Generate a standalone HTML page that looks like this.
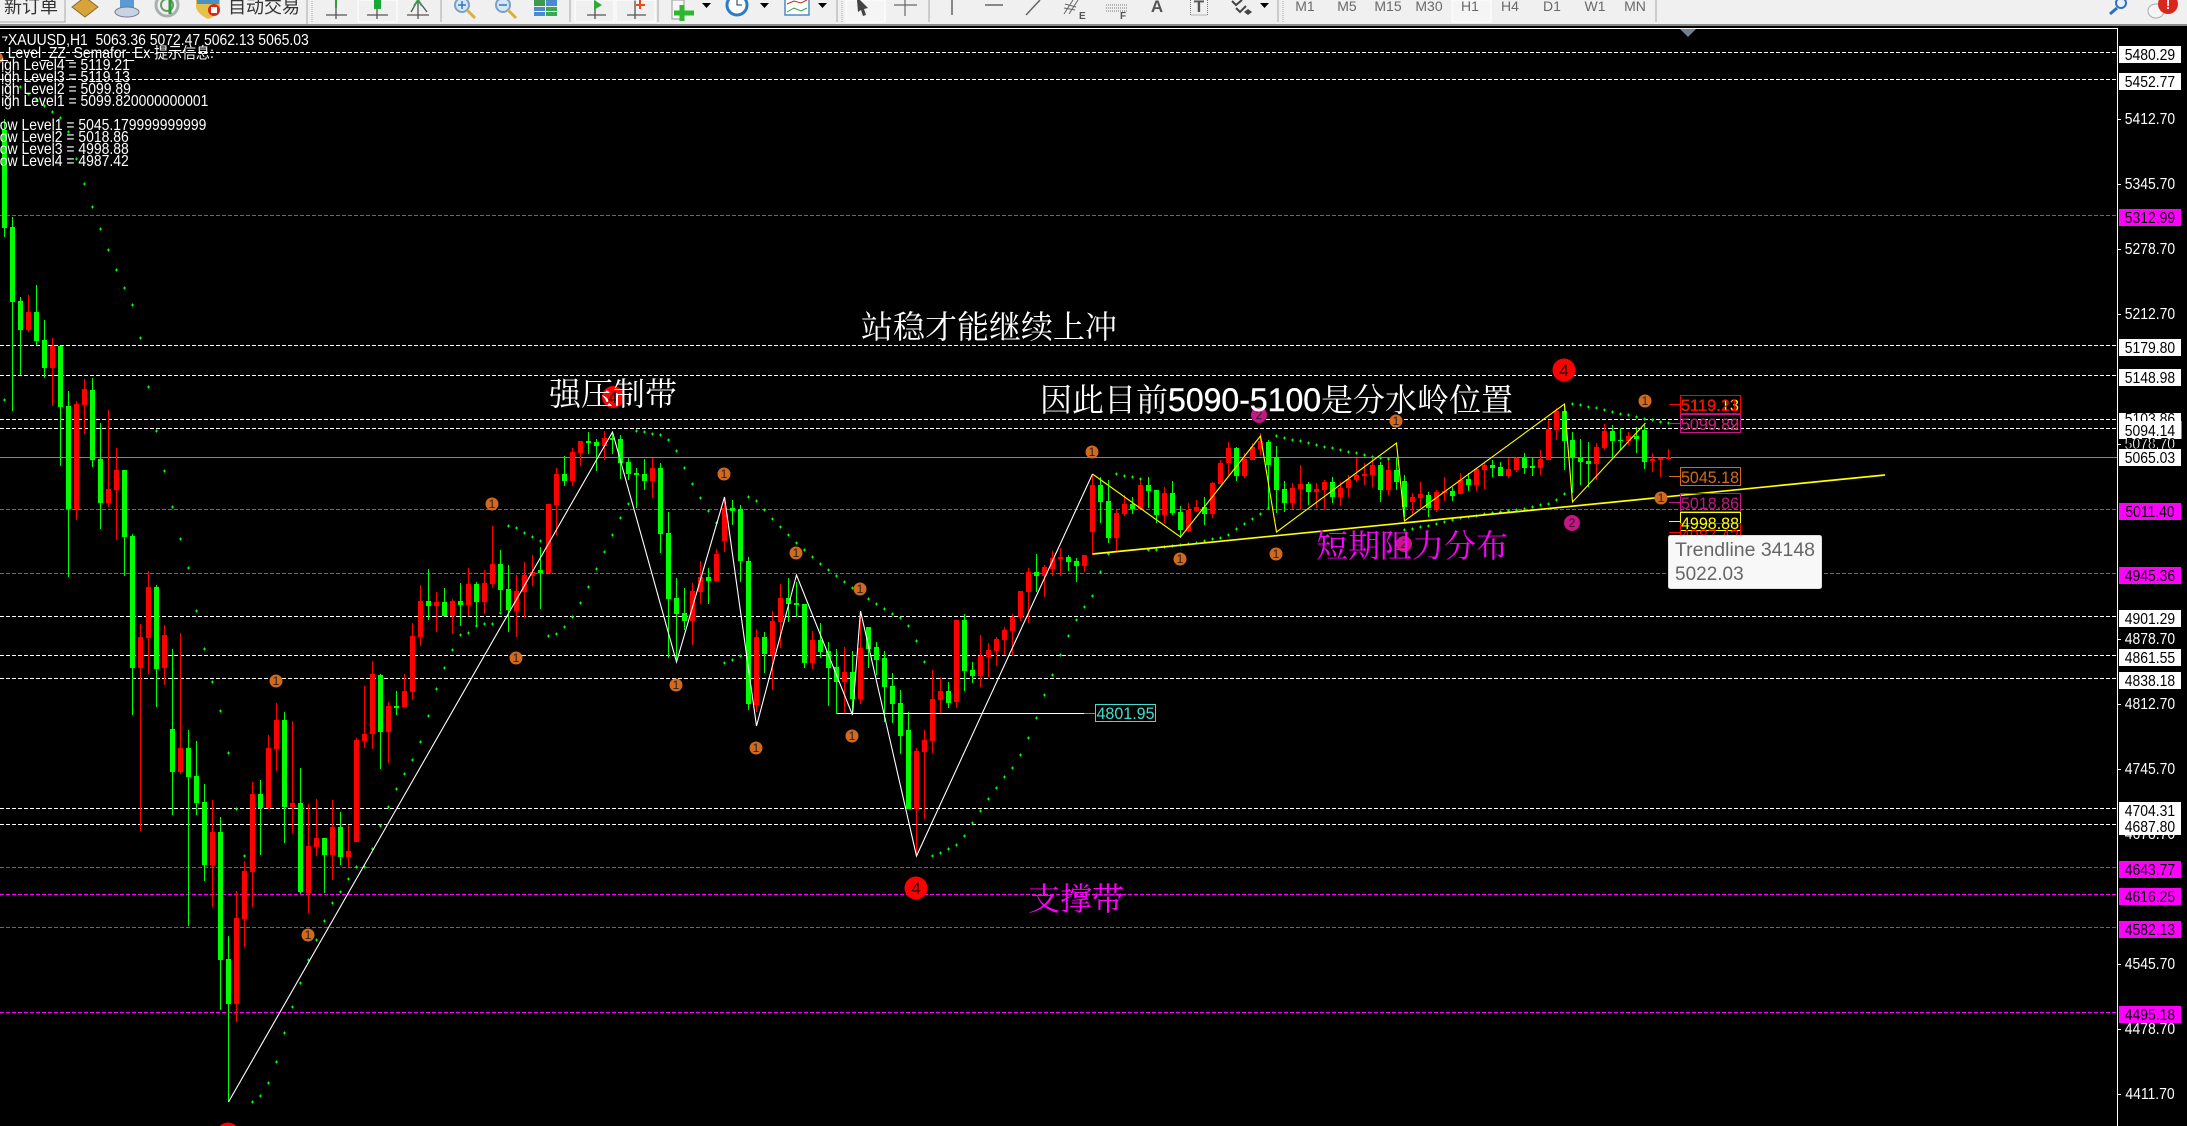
<!DOCTYPE html>
<html><head><meta charset="utf-8"><title>XAUUSD,H1</title>
<style>
html,body{margin:0;padding:0;background:#000;width:2187px;height:1126px;overflow:hidden}
svg{display:block;position:absolute;left:0;top:0}
text{font-family:"Liberation Sans","Noto Serif CJK SC",serif}
.i{font-size:15.500px;fill:#fff}
.t{font-size:15.500px;fill:#fff;text-anchor:middle}
.b{font-size:15.500px;fill:#000;text-anchor:middle}
.c{font-size:32px}
.tb{font-size:18px;fill:#333;font-family:"Liberation Sans","Noto Sans CJK SC",sans-serif}
.p{font-size:14px;fill:#6a6a6a;text-anchor:middle}
.n{font-size:12px;fill:#222;text-anchor:middle}
.l{font-size:17px}
</style></head><body>
<svg width="2187" height="1126" viewBox="0 0 2187 1126" xmlns="http://www.w3.org/2000/svg">
<defs><marker id="p" markerWidth="5" markerHeight="5" refX="2.5" refY="2.5" markerUnits="userSpaceOnUse"><path d="M1 2.5H4M2.5 1V4" stroke="#0f0" stroke-width="1" fill="none" shape-rendering="crispEdges"/></marker></defs>
<rect width="2187" height="1126" fill="#000"/>

<!-- toolbar -->
<rect width="2187" height="24" fill="#f0f0f0"/>
<rect y="24" width="2187" height="2" fill="#8c8c8c"/>
<path d="M0 22H65V0" fill="none" stroke="#a8a8a8"/>
<text class="tb" x="4" y="13">新订单</text>
<path d="M72 7L85-3L98 7L85 17Z" fill="#d8a23c" stroke="#8a6a2b"/>
<path d="M120 0H134V9H120Z" fill="#5b9bd5"/><ellipse cx="127" cy="12" rx="12" ry="5" fill="#c5d3e2" stroke="#778"/>
<circle cx="167" cy="5" r="11" fill="none" stroke="#a9b0b0" stroke-width="3"/><circle cx="167" cy="5" r="6" fill="none" stroke="#6b9b6b" stroke-width="2"/><path d="M170 0V14" stroke="#2f9a3a" stroke-width="3"/>
<path d="M196 0H220V8Q216 17 208 19Q199 15 196 8Z" fill="#e5c04a"/><path d="M197 0H219V4H197Z" fill="#4a90c0"/><circle cx="214" cy="10" r="6" fill="#d8281e"/><rect x="211" y="7" width="6" height="6" fill="#fff"/>
<text class="tb" x="228" y="13">自动交易</text>
<path d="M307 0V24" stroke="#a8a8a8"/><path d="M312 1V23" stroke="#aaa" stroke-dasharray="1 1"/>
<g fill="none" stroke="#555" stroke-width="1.3"><path d="M326 15H347M336 0V19M377 0V19M367 15H388M418 0V19M407 15H429M411 12L418 0L427 12"/><path d="M587 15H606M595 0V19M627 15H646M635 0V19"/></g>
<rect x="358" y="0" width="39" height="22" fill="none" stroke="#fff"/>
<path d="M336 0V8" stroke="#2e9a3a" stroke-width="2"/><rect x="374" y="0" width="7" height="9" fill="#18a83a"/><path d="M414 6L418 0L422 6" stroke="#3a9a50" fill="none" stroke-width="2"/>
<path d="M441 0V22M570 0V22M658 0V22" stroke="#a8a8a8"/>
<g><circle cx="462" cy="5" r="7" fill="#d5e6f5" stroke="#7aa0c8" stroke-width="2"/><path d="M467 10L475 18" stroke="#d8b13a" stroke-width="3"/><path d="M458 5H466M462 1V9" stroke="#2c7ac0" stroke-width="1.5"/><circle cx="503" cy="5" r="7" fill="#d5e6f5" stroke="#7aa0c8" stroke-width="2"/><path d="M508 10L516 18" stroke="#d8b13a" stroke-width="3"/><path d="M499 5H507" stroke="#2c7ac0" stroke-width="1.5"/></g>
<rect x="534" y="0" width="11" height="6" fill="#3a9a50"/><rect x="546" y="0" width="11" height="6" fill="#4a8ad0"/><rect x="534" y="7" width="11" height="9" fill="#4a8ad0"/><rect x="546" y="7" width="11" height="9" fill="#3aaa50"/><path d="M534 11.5H557" stroke="#fff"/>
<rect x="575" y="0" width="39" height="22" fill="none" stroke="#fff"/><rect x="616" y="0" width="39" height="22" fill="none" stroke="#fff"/>
<path d="M594 0L602 5L594 10Z" fill="#2ea83c"/><path d="M640 0V9M636 5H645" stroke="#e04a1e" stroke-width="2"/>
<path d="M672 0H684V19H672Z" fill="#f8f8f8" stroke="#999"/><path d="M682 5V21M674 13H694" stroke="#2fb62f" stroke-width="5"/>
<path d="M702 3H711L706.500 8Z" fill="#000"/>
<circle cx="737" cy="5" r="10" fill="#fff" stroke="#2b7cc4" stroke-width="3"/><path d="M737 0V5H742" stroke="#234" fill="none"/>
<path d="M760 3H769L764.500 8Z" fill="#000"/>
<rect x="785" y="-2" width="24" height="17" fill="#fff" stroke="#4a8ac4" stroke-width="1.5"/><path d="M787 4L794 1L801 3L807 0" stroke="#b03020" fill="none"/><path d="M787 12L794 8L801 11L807 8" stroke="#30a040" fill="none"/>
<path d="M818 3H827L822.500 8Z" fill="#000"/>
<path d="M837 0V22" stroke="#a8a8a8"/><path d="M842 1V23" stroke="#aaa" stroke-dasharray="1 1"/>
<rect x="846" y="0" width="39" height="22" fill="#f5f5f5" stroke="#fff"/>
<path d="M857 0L860 0L868 8L864 9L866 15L863 16L861 10L858 12Z" fill="#444"/>
<path d="M894 5H917M905 0V16" stroke="#666" stroke-width="1.2"/>
<path d="M929 0V22" stroke="#a8a8a8"/>
<path d="M952 0V15" stroke="#666" stroke-width="1.5"/><path d="M985 5H1003" stroke="#666" stroke-width="1.5"/><path d="M1040 0L1026 15" stroke="#666" stroke-width="1.5"/>
<path d="M1073 0L1064 14M1078 0L1069 14M1065 4L1076 7M1064 8L1075 10" stroke="#666" fill="none"/>
<text x="1079" y="19" style="font-size:10px;font-weight:bold" fill="#555">E</text>
<path d="M1106 5H1127M1106 8H1127M1106 11H1127" stroke="#777" stroke-dasharray="1 1"/>
<text x="1120" y="19" style="font-size:10px;font-weight:bold" fill="#555">F</text>
<text x="1157" y="12" style="font-size:17px;font-weight:bold;text-anchor:middle" fill="#555">A</text>
<rect x="1190.500" y="-3" width="17" height="18" fill="none" stroke="#777" stroke-dasharray="1 1"/>
<text x="1199" y="12" style="font-size:17px;font-weight:bold;text-anchor:middle" fill="#555">T</text>
<path d="M1232 1L1236 5L1242 0M1236 8L1240 12L1246 6" stroke="#444" fill="none" stroke-width="2"/><path d="M1244 12L1248 9L1252 12L1248 15Z" fill="#444"/>
<path d="M1260 3H1269L1264.500 8Z" fill="#000"/>
<path d="M1278 0V22" stroke="#a8a8a8"/><path d="M1283 1V23" stroke="#aaa" stroke-dasharray="1 1"/>
<rect x="1452" y="0" width="39" height="22" fill="#f5f5f5" stroke="#fff"/>
<text class="p" x="1305" y="11">M1</text><text class="p" x="1347" y="11">M5</text><text class="p" x="1388" y="11">M15</text><text class="p" x="1429" y="11">M30</text><text class="p" x="1470" y="11">H1</text><text class="p" x="1510" y="11">H4</text><text class="p" x="1552" y="11">D1</text><text class="p" x="1595" y="11">W1</text><text class="p" x="1635" y="11">MN</text>
<path d="M1656 0V22" stroke="#a8a8a8"/>
<circle cx="2121" cy="3" r="5" fill="#e8f2fb" stroke="#2f6fc0" stroke-width="2"/><path d="M2117 8L2110 14" stroke="#2f6fc0" stroke-width="3"/>
<ellipse cx="2156" cy="11" rx="8" ry="7" fill="#f5f5f5" stroke="#aaa"/><circle cx="2168" cy="4" r="10" fill="#d8281e"/><text x="2168" y="9" style="font-size:13px;font-weight:bold;text-anchor:middle" fill="#fff">!</text>

<!-- chart frame -->
<path d="M0 28.500H2117.500V1126" fill="none" stroke="#fff" shape-rendering="crispEdges"/>
<path d="M1680 29H1696L1688 37Z" fill="#708090"/>

<!-- horizontal lines -->
<g shape-rendering="crispEdges" fill="none">
<path stroke="#fff" stroke-dasharray="4 2" d="M0 52.500H2117M0 79.500H2117M0 345.500H2117M0 375.500H2117M0 419.500H2117M0 428.500H2117M0 616.500H2117M0 655.500H2117M0 678.500H2117M0 808.500H2117M0 824.500H2117"/>
<path stroke="#f0f" stroke-dasharray="4 2" d="M0 215.500H2117M0 509.500H2117M0 573.500H2117M0 867.500H2117M0 894.500H2117M0 927.500H2117M0 1012.500H2117"/>
<path stroke="#778899" d="M0 457.500H2117"/>
</g>

<!-- candles -->
<g fill="none" shape-rendering="crispEdges">
<path stroke="#0f0" d="M4.500 119V237M12.500 217V411M20.500 297V375M36.500 285V345M44.500 320V378M60.500 346V466M68.500 391V577M92.500 378V467M100.500 423V529M124.500 470V576M132.500 534V715M156.500 585V707M172.500 649V815M188.500 730V926M196.500 741V815M204.500 784V881M220.500 817V1010M228.500 936V1102M260.500 780V855M284.500 712V843M300.500 768V894M324.500 838V893M340.500 812V865M380.500 674V769M396.500 691V715M428.500 569V620M444.500 588V616M460.500 583V626M476.500 582V627M500.500 550V611M508.500 565V632M540.500 547V609M564.500 456V486M588.500 432V454M596.500 439V471M612.500 432V454M620.500 435V479M628.500 458V480M636.500 468V508M644.500 459V490M660.500 463V553M668.500 512V658M676.500 578V662M684.500 588V630M708.500 568V604M732.500 500V525M740.500 505V582M748.500 557V710M764.500 632V673M788.500 578V622M796.500 582V617M804.500 604V668M820.500 623V658M828.500 642V706M836.500 649V713M852.500 651V713M868.500 627V668M876.500 642V675M884.500 651V722M892.500 673V723M900.500 690V754M908.500 712V809M948.500 682V708M964.500 614V691M972.500 662V683M1036.500 554V592M1068.500 555V571M1076.500 558V582M1100.500 477V523M1108.500 480V543M1132.500 497V514M1148.500 477V508M1156.500 490V523M1172.500 481V515M1180.500 506V538M1204.500 497V525M1236.500 447V481M1268.500 440V508M1276.500 446V513M1284.500 481V512M1308.500 482V505M1332.500 477V503M1380.500 462V502M1396.500 458V490M1404.500 475V517M1428.500 492V517M1452.500 487V501M1468.500 473V491M1492.500 460V477M1500.500 462V476M1524.500 453V474M1532.500 458V476M1564.500 405V470M1572.500 432V493M1580.500 439V485M1588.500 442V487M1612.500 425V457M1620.500 428V450M1636.500 427V453M1644.500 425V469"/>
<path stroke="#0f0" stroke-width="5" d="M4.500 130V228M12.500 227V302M20.500 301V330M36.500 312V341M44.500 340V368M60.500 346V407M68.500 406V509M92.500 390V460M100.500 459V503M124.500 470V537M132.500 536V668M156.500 587V669M172.500 729V772M188.500 748V777M196.500 776V803M204.500 802V865M220.500 832V960M228.500 959V1004M260.500 794V808M284.500 720V807M300.500 803V892M324.500 838V855M340.500 827V857M380.500 675V732M396.500 706V708M428.500 601V606M444.500 602V616M460.500 601V605M476.500 584V602M500.500 564V590M508.500 589V610M540.500 570V573M564.500 474V481M588.500 441V443M596.500 442V446M612.500 438V440M620.500 439V463M628.500 462V474M636.500 473V475M644.500 474V481M660.500 468V534M668.500 533V599M676.500 598V614M684.500 613V621M708.500 577V581M732.500 508V511M740.500 509V561M748.500 561V704M764.500 637V654M788.500 598V604M796.500 603V605M804.500 604V663M820.500 640V652M828.500 651V668M836.500 667V682M852.500 672V699M868.500 627V649M876.500 647V660M884.500 658V687M892.500 686V704M900.500 703V736M908.500 730V809M948.500 691V703M964.500 620V671M972.500 670V676M1036.500 572V576M1068.500 557V562M1076.500 561V566M1100.500 485V502M1108.500 501V538M1132.500 504V509M1148.500 485V491M1156.500 490V515M1172.500 493V513M1180.500 512V530M1204.500 507V514M1236.500 448V476M1268.500 442V465M1276.500 457V490M1284.500 489V503M1308.500 484V492M1332.500 482V497M1380.500 465V490M1396.500 470V482M1404.500 481V507M1428.500 495V508M1452.500 491V496M1468.500 479V485M1492.500 465V468M1500.500 467V476M1524.500 458V468M1532.500 466V468M1564.500 411V441M1572.500 440V458M1580.500 458V462M1588.500 461V464M1612.500 431V441M1620.500 440V441M1636.500 436V439M1644.500 430V462"/>
<path stroke="#f00" d="M28.500 295V332M52.500 338V406M76.500 401V520M84.500 379V434M108.500 410V507M116.500 448V540M140.500 624V831M148.500 571V674M164.500 625V685M180.500 633V774M212.500 800V907M236.500 891V1022M244.500 861V947M252.500 782V907M268.500 735V809M276.500 703V771M292.500 721V833M308.500 804V913M316.500 799V856M332.500 800V880M348.500 825V867M356.500 738V842M364.500 686V748M372.500 661V749M388.500 702V763M404.500 674V707M412.500 623V700M420.500 585V646M436.500 592V632M452.500 599V634M468.500 568V616M484.500 570V614M492.500 526V588M516.500 575V637M524.500 562V617M532.500 555V586M548.500 504V573M556.500 468V535M572.500 448V486M580.500 441V466M604.500 431V460M652.500 458V498M692.500 583V645M700.500 561V604M716.500 549V582M724.500 498V552M756.500 629V712M772.500 611V690M780.500 584V648M812.500 631V669M844.500 647V713M860.500 612V704M916.500 748V856M924.500 730V819M932.500 670V753M940.500 677V714M956.500 620V708M980.500 635V687M988.500 643V677M996.500 637V666M1004.500 627V655M1012.500 614V655M1020.500 591V621M1028.500 568V623M1044.500 565V597M1052.500 551V576M1060.500 548V576M1084.500 555V572M1092.500 475V555M1116.500 510V551M1124.500 495V516M1140.500 478V509M1164.500 487V523M1188.500 503V532M1196.500 500V512M1212.500 482V518M1220.500 460V484M1228.500 442V475M1244.500 453V478M1252.500 443V460M1260.500 433V455M1292.500 483V509M1300.500 465V510M1316.500 483V508M1324.500 480V510M1340.500 482V506M1348.500 475V497M1356.500 458V482M1364.500 463V485M1372.500 458V487M1388.500 458V495M1412.500 493V515M1420.500 482V508M1436.500 490V512M1444.500 477V501M1460.500 473V494M1476.500 468V491M1484.500 462V489M1508.500 458V478M1516.500 457V472M1540.500 450V475M1548.500 420V460M1556.500 408V440M1596.500 443V480M1604.500 424V450M1628.500 432V445M1652.500 453V472M1660.500 458V477M1668.500 449V460"/>
<path stroke="#f00" stroke-width="5" d="M28.500 312V330M52.500 346V368M76.500 404V509M84.500 389V405M108.500 489V503M116.500 470V490M140.500 637V668M148.500 587V638M164.500 635V668M180.500 748V772M212.500 832V865M236.500 918V1004M244.500 871V919M252.500 794V872M268.500 748V808M276.500 720V749M292.500 803V807M308.500 846V893M316.500 838V847M332.500 827V855M348.500 851V857M356.500 740V842M364.500 734V741M372.500 674V734M388.500 706V732M404.500 691V707M412.500 636V692M420.500 601V637M436.500 602V606M452.500 601V616M468.500 584V605M484.500 583V602M492.500 564V584M516.500 591V611M524.500 575V592M532.500 572V576M548.500 504V573M556.500 474V505M572.500 452V481M580.500 441V453M604.500 438V446M652.500 468V481M692.500 591V621M700.500 577V592M716.500 554V581M724.500 508V541M756.500 637V705M772.500 621V655M780.500 598V622M812.500 640V663M844.500 672V682M860.500 648V699M916.500 751V809M924.500 740V752M932.500 699V741M940.500 691V700M956.500 620V702M980.500 656V676M988.500 650V657M996.500 639V651M1004.500 630V640M1012.500 617V631M1020.500 591V617M1028.500 572V592M1044.500 567V576M1052.500 558V569M1060.500 557V559M1084.500 555V566M1092.500 485V532M1116.500 513V538M1124.500 504V514M1140.500 485V509M1164.500 493V515M1188.500 510V531M1196.500 507V511M1212.500 483V514M1220.500 463V484M1228.500 448V463M1244.500 459V476M1252.500 447V460M1260.500 441V449M1292.500 488V503M1300.500 484V489M1316.500 489V492M1324.500 482V490M1340.500 488V497M1348.500 479V488M1356.500 475V480M1364.500 474V476M1372.500 465V475M1388.500 470V490M1412.500 497V502M1420.500 494V498M1436.500 492V509M1444.500 491V493M1460.500 480V494M1476.500 469V485M1484.500 465V470M1508.500 469V476M1516.500 458V470M1540.500 459V468M1548.500 429V460M1556.500 411V430M1596.500 447V464M1604.500 431V448M1628.500 436V441M1652.500 459V461M1660.500 458V460M1668.500 457V459"/>
</g>

<!-- SAR dots -->
<polyline fill="none" stroke="none" marker-start="url(#p)" marker-mid="url(#p)" marker-end="url(#p)" points="20.500,87 28.500,94 36.500,100 44.500,106 52.500,112 60.500,118 68.500,132 76.500,159 84.500,184 92.500,207 100.500,229 108.500,250 116.500,270 124.500,288 132.500,305 140.500,338 148.500,387 156.500,431 164.500,471 172.500,507 180.500,539 188.500,568 196.500,611 204.500,649 212.500,682 220.500,711 228.500,753 236.500,809 244.500,856 4.500,400 252.500,1102 260.500,1096 268.500,1083 276.500,1062 284.500,1033 292.500,1007 300.500,983 308.500,960 316.500,940 324.500,921 332.500,903 340.500,892 348.500,879 356.500,867 364.500,867 372.500,849 380.500,826 388.500,807 396.500,789 404.500,774 412.500,760 420.500,742 428.500,716 436.500,689 444.500,668 452.500,650 460.500,635 468.500,633 476.500,626 484.500,624 492.500,624 500.500,613 508.500,526 516.500,528 524.500,533 532.500,537 540.500,541 548.500,636 556.500,634 564.500,627 572.500,617 580.500,603 588.500,587 596.500,569 604.500,552 612.500,535 620.500,518 628.500,504 636.500,431 644.500,432 652.500,434 660.500,435 668.500,440 676.500,451 684.500,468 692.500,484 700.500,498 708.500,511 716.500,523 724.500,663 732.500,660 740.500,656 748.500,497 756.500,501 764.500,510 772.500,519 780.500,527 788.500,535 796.500,543 804.500,550 812.500,557 820.500,564 828.500,570 836.500,576 844.500,582 852.500,588 860.500,594 868.500,599 876.500,604 884.500,609 892.500,614 900.500,618 908.500,626 916.500,641 924.500,662 932.500,856 940.500,853 948.500,849 956.500,845 964.500,836 972.500,823 980.500,811 988.500,799 996.500,788 1004.500,777 1012.500,768 1020.500,755 1028.500,738 1036.500,718 1044.500,695 1052.500,675 1060.500,655 1068.500,636 1076.500,620 1084.500,607 1092.500,596 1100.500,572 1108.500,554 1116.500,474 1124.500,476 1132.500,477 1140.500,479 1148.500,550 1156.500,550 1164.500,547 1172.500,546 1180.500,545 1188.500,544 1196.500,543 1204.500,541 1212.500,539 1220.500,538 1228.500,535 1236.500,529 1244.500,524 1252.500,519 1260.500,514 1268.500,508 1276.500,436 1284.500,438 1292.500,440 1300.500,441 1308.500,443 1316.500,445 1324.500,447 1332.500,448 1340.500,450 1348.500,452 1356.500,453 1364.500,455 1372.500,457 1380.500,458 1388.500,459 1404.500,530 1412.500,529 1420.500,527 1428.500,526 1436.500,524 1444.500,522 1452.500,520 1460.500,518 1468.500,517 1476.500,516 1484.500,514 1492.500,513 1500.500,512 1508.500,511 1516.500,510 1524.500,509 1532.500,507 1540.500,505 1548.500,504 1556.500,500 1564.500,494 1572.500,404 1580.500,405 1588.500,407 1596.500,408 1604.500,410 1612.500,412 1620.500,414 1628.500,415 1636.500,417 1644.500,419 1652.500,420 1660.500,422 1668.500,423"/>

<!-- zigzags -->
<path fill="none" stroke="#fff" stroke-width="1.100" d="M228.500 1102L612.500 432L676.500 662L724.500 497L756.500 726L796.500 575L852.500 715L860.500 611L916.500 856L1092.500 474"/>
<path fill="none" stroke="#fff" d="M836.500 713.500H1084" shape-rendering="crispEdges"/>
<path fill="none" stroke="#20b2aa" d="M1084 713.500H1095" shape-rendering="crispEdges"/>
<rect x="1095.500" y="704.500" width="60" height="17" fill="none" stroke="#40e0d0" shape-rendering="crispEdges"/>
<text x="1125.500" y="719" class="l" fill="#40e0d0" text-anchor="middle" textLength="58" lengthAdjust="spacingAndGlyphs">4801.95</text>
<path fill="none" stroke="#ff0" stroke-width="1.100" d="M1092.500 474L1180.500 537L1260.500 436L1276.500 532L1396.500 443L1404.500 521L1564.500 404L1572.500 502L1645.500 423"/>
<path fill="none" stroke="#ff0" stroke-width="1.700" d="M1092.500 554L1885 475"/>

<!-- right semafor labels -->
<g fill="none" shape-rendering="crispEdges">
<path stroke="#f00" d="M1669 404.500H1680M1669 532.500H1680"/><path stroke="#c71585" d="M1669 423.500H1680M1669 502.500H1680"/><path stroke="#d2691e" d="M1669 476.500H1680"/><path stroke="#ff0" d="M1669 521.500H1680"/>
<rect x="1680.500" y="395.500" width="60" height="18" stroke="#f00"/>
<rect x="1680.500" y="414.500" width="60" height="18" stroke="#c71585"/>
<rect x="1680.500" y="467.500" width="60" height="18" stroke="#d2691e"/>
<rect x="1680.500" y="493.500" width="60" height="18" stroke="#c71585"/>
<rect x="1680.500" y="512.500" width="60" height="18" stroke="#ff0"/>
<rect x="1680.500" y="523.500" width="60" height="30" stroke="#f00"/>
</g>
<text x="1681" y="411" class="l" fill="#ff0" textLength="58" lengthAdjust="spacingAndGlyphs">5119.13</text>
<text x="1681" y="411" class="l" fill="#f00" textLength="58" lengthAdjust="spacingAndGlyphs">5119.21</text>
<text x="1681" y="430" class="l" fill="#d2691e" textLength="58" lengthAdjust="spacingAndGlyphs">5099.82</text>
<text x="1681" y="430" class="l" fill="#c71585" textLength="58" lengthAdjust="spacingAndGlyphs">5099.89</text>
<text x="1681" y="483" class="l" fill="#d2691e" textLength="58" lengthAdjust="spacingAndGlyphs">5045.18</text>
<text x="1681" y="509" class="l" fill="#c71585" textLength="58" lengthAdjust="spacingAndGlyphs">5018.86</text>
<text x="1681" y="529" class="l" fill="#ff0" textLength="58" lengthAdjust="spacingAndGlyphs">4998.88</text>
<text x="1681" y="541" class="l" fill="#f00" textLength="58" lengthAdjust="spacingAndGlyphs">4987.42</text>

<!-- semafor circles -->
<g fill="#d2691e"><circle cx="492" cy="504" r="6.500"/><circle cx="516" cy="658" r="6.500"/><circle cx="276" cy="681" r="6.500"/><circle cx="676" cy="685" r="6.500"/><circle cx="724" cy="474" r="6.500"/><circle cx="796" cy="553" r="6.500"/><circle cx="860" cy="589" r="6.500"/><circle cx="756" cy="748" r="6.500"/><circle cx="852" cy="736" r="6.500"/><circle cx="1092" cy="452" r="6.500"/><circle cx="1180" cy="559" r="6.500"/><circle cx="1276" cy="554" r="6.500"/><circle cx="1396" cy="421" r="6.500"/><circle cx="308" cy="935" r="6.500"/><circle cx="1645" cy="401" r="6.500"/><circle cx="1661" cy="498" r="6.500"/><circle cx="-3" cy="58" r="6"/></g>
<g><text class="n" x="492" y="508">1</text><text class="n" x="516" y="662">1</text><text class="n" x="276" y="685">1</text><text class="n" x="676" y="689">1</text><text class="n" x="724" y="478">1</text><text class="n" x="796" y="557">1</text><text class="n" x="860" y="593">1</text><text class="n" x="756" y="752">1</text><text class="n" x="852" y="740">1</text><text class="n" x="1092" y="456">1</text><text class="n" x="1180" y="563">1</text><text class="n" x="1276" y="558">1</text><text class="n" x="1396" y="425">1</text><text class="n" x="308" y="939">1</text><text class="n" x="1645" y="405">1</text><text class="n" x="1661" y="502">1</text></g>
<g fill="#c71585"><circle cx="1259" cy="415" r="8"/><circle cx="1404" cy="544" r="8"/><circle cx="1572" cy="523" r="8"/></g>
<text class="n" x="1259" y="419">2</text><text class="n" x="1404" y="548">2</text><text class="n" x="1572" y="527">2</text>
<g fill="#f00"><circle cx="916" cy="888" r="11.500"/><circle cx="613" cy="397" r="11"/><circle cx="1564" cy="370" r="11.500"/><circle cx="228" cy="1134" r="11.500"/></g>
<g style="font-size:17px;text-anchor:middle" fill="#111"><text x="916" y="894">4</text><text x="613" y="403">4</text><text x="1564" y="376">4</text></g>

<!-- big labels -->
<text class="c" x="861" y="338" fill="#fff">站稳才能继续上冲</text>
<text class="c" x="549" y="405" fill="#fff">强压制带</text>
<text class="c" x="1040" y="411" fill="#fff">因此目前<tspan stroke="#fff" stroke-width=".4">5090-5100</tspan>是分水岭位置</text>
<text class="c" x="1316" y="557" fill="#f0f">短期阻力分布</text>
<text class="c" x="1028" y="910" fill="#f0f">支撑带</text>

<!-- info text -->
<path d="M2 37H7L5 41" stroke="#fff" fill="none"/>
<g transform="matrix(.9 0 0 1 0 0)">
<text class="i" x="8.900" y="45" xml:space="preserve">XAUUSD,H1  5063.36 5072.47 5062.13 5065.03</text>
<text class="i" x="0" y="58" style="font-family:'Liberation Sans','Noto Sans CJK SC',sans-serif">_Level_ZZ_Semafor_Ex 提示信息:</text>
<text class="i" x="-10" y="70">High Level4 = 5119.21</text>
<text class="i" x="-10" y="82">High Level3 = 5119.13</text>
<text class="i" x="-10" y="94">High Level2 = 5099.89</text>
<text class="i" x="-10" y="106">High Level1 = 5099.820000000001</text>
<text class="i" x="-8.900" y="130">Low Level1 = 5045.179999999999</text>
<text class="i" x="-8.900" y="142">Low Level2 = 5018.86</text>
<text class="i" x="-8.900" y="154">Low Level3 = 4998.88</text>
<text class="i" x="-8.900" y="166">Low Level4 = 4987.42</text>
</g>

<!-- tooltip -->
<rect x="1668.500" y="535.500" width="153" height="53" rx="2" fill="#f8f8f8" stroke="#ddd"/>
<text x="1675" y="556" style="font-size:19px" fill="#666" textLength="140" lengthAdjust="spacingAndGlyphs">Trendline 34148</text>
<text x="1675" y="580" style="font-size:19px" fill="#666">5022.03</text>

<!-- price axis -->
<rect x="2118" y="29" width="69" height="1097" fill="#000"/>
<path d="M2118 119.500h3M2118 184.500h3M2118 249.500h3M2118 314.500h3M2118 444.500h3M2118 639.500h3M2118 704.500h3M2118 769.500h3M2118 964.500h3M2118 1029.500h3M2118 1094.500h3" stroke="#fff" shape-rendering="crispEdges"/>
<g transform="matrix(.9 0 0 1 215 0)"><text class="t" x="2150" y="124">5412.70</text><text class="t" x="2150" y="189">5345.70</text><text class="t" x="2150" y="254">5278.70</text><text class="t" x="2150" y="319">5212.70</text><text class="t" x="2150" y="644">4878.70</text><text class="t" x="2150" y="709">4812.70</text><text class="t" x="2150" y="774">4745.70</text><text class="t" x="2150" y="839">4678.70</text><text class="t" x="2150" y="969">4545.70</text><text class="t" x="2150" y="1034">4478.70</text><text class="t" x="2150" y="1099">4411.70</text></g>
<g fill="#fff"><rect x="2119" y="46" width="62" height="17"/><rect x="2119" y="73" width="62" height="17"/><rect x="2119" y="339" width="62" height="17"/><rect x="2119" y="369" width="62" height="17"/><rect x="2119" y="413" width="62" height="26"/><rect x="2119" y="449" width="62" height="17"/><rect x="2119" y="610" width="62" height="17"/><rect x="2119" y="649" width="62" height="17"/><rect x="2119" y="672" width="62" height="17"/><rect x="2119" y="802" width="62" height="33"/></g>
<g fill="#f0f"><rect x="2119" y="209" width="62" height="17"/><rect x="2119" y="503" width="62" height="17"/><rect x="2119" y="567" width="62" height="17"/><rect x="2119" y="861" width="62" height="17"/><rect x="2119" y="888" width="62" height="17"/><rect x="2119" y="921" width="62" height="17"/><rect x="2119" y="1006" width="62" height="17"/></g>
<g transform="matrix(.9 0 0 1 215 0)"><text class="b" x="2150" y="60">5480.29</text><text class="b" x="2150" y="87">5452.77</text><text class="b" x="2150" y="223">5312.99</text><text class="b" x="2150" y="353">5179.80</text><text class="b" x="2150" y="383">5148.98</text><text class="b" x="2150" y="424">5103.86</text><rect x="2116" y="421" width="69" height="18" fill="#fff"/><text class="b" x="2150" y="436">5094.14</text><text class="t" x="2150" y="449">5078.70</text><text class="b" x="2151" y="449">5078.70</text><text class="b" x="2150" y="463">5065.03</text><text class="b" x="2150" y="517">5011.40</text><text class="b" x="2150" y="581">4945.36</text><text class="b" x="2150" y="624">4901.29</text><text class="b" x="2150" y="663">4861.55</text><text class="b" x="2150" y="686">4838.18</text><text class="b" x="2150" y="816">4704.31</text><text class="b" x="2150" y="832">4687.80</text><text class="b" x="2150" y="875">4643.77</text><text class="b" x="2150" y="902">4616.25</text><text class="b" x="2150" y="935">4582.13</text><text class="b" x="2150" y="1020">4495.18</text></g>
</svg>
</body></html>
